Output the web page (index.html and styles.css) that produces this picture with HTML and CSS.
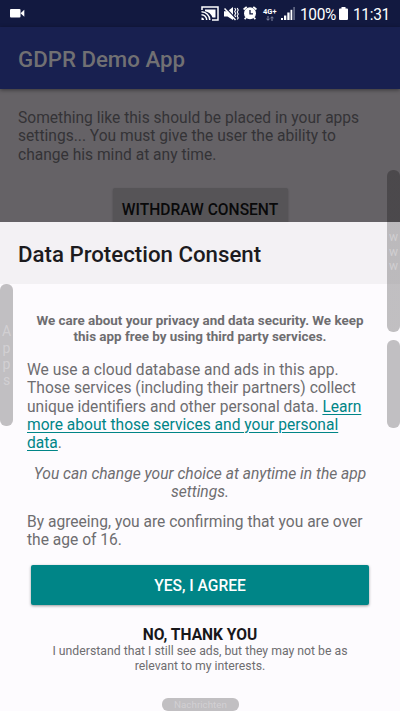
FILE: index.html
```html
<!DOCTYPE html>
<html lang="en">
<head>
<meta charset="utf-8">
<title>GDPR Demo App</title>
<link rel="stylesheet" href="styles.css">
</head>
<body>
<div class="screen">
  <header class="status">
    <svg class="camera" width="15" height="9" viewBox="0 0 15 9"><rect width="10.5" height="8.4" rx="1" fill="#fff"/><path d="M10.500 4.200 14.300.8v7z" fill="#fff"/></svg>
    <div class="status-right">
      <svg class="cast" width="18" height="15" viewBox="0 0 18 15" fill="none" stroke="#fff"><path d="M1 4V1h16v13h-6" stroke-width="1.500"/><path d="M4 3.500h10.500v8h-3C10.500 8 7.500 5.800 4 5.200z" fill="#fff" stroke="none"/><path d="M.5 5.800A8.300 8.300 0 0 1 8.800 14M.5 8.800A5.200 5.200 0 0 1 5.700 14" stroke-width="1.500"/><path d="M.5 11.500A2.500 2.500 0 0 1 3 14H.5z" fill="#fff" stroke="none"/></svg>
      <svg class="mute" width="15" height="14" viewBox="0 0 15 14"><path d="M0 4.300h3.500L9 0v13L3.500 9.500H0z" fill="#fff"/><path d="m1.500 .5 10.500 11.500" stroke="#121940" stroke-width="1.200"/><path d="m.5 1.500 11 11.500" stroke="#fff" stroke-width="1.500"/><path d="m10.700 1 1 1.800-1 1.800 1 1.800-1 1.800 1 1.800M13.200 1l1 2-1 2 1 2-1 2 1 2-1 1.500" fill="none" stroke="#fff" stroke-width="1.100"/></svg>
      <svg class="alarm" width="14" height="14" viewBox="0 0 14 14"><circle cx="7" cy="7.300" r="6" fill="#fff"/><path d="M.6 3.500 3.700.8M13.400 3.500 10.300.8M3 11.500l-1.300 1.800M11 11.500l1.300 1.800" stroke="#fff" stroke-width="1.700"/><path d="M7 4v3.800h3" fill="none" stroke="#121940" stroke-width="1.300"/></svg>
      <div class="network"><span>4G+</span><svg width="8" height="5" viewBox="0 0 8 5" stroke="#8288a0" fill="none"><path d="M2 0v4M.5 2.700 2 4.300l1.500-1.600M6 5V1M4.500 2.300 6 .7l1.500 1.600"/></svg></div>
      <svg class="signal" width="14" height="13" viewBox="0 0 14 13"><path d="M0 11h2v2H0zM3 8.500h2.300V13H3zM6.300 5.500h2.300V13H6.300z" fill="#fff"/><path d="M9.500 2.800h1.800V13H9.500z" fill="#fff"/><path d="M12.200 0H14v13h-1.800z" fill="#5c627f"/></svg>
      <span class="percent">100%</span>
      <svg class="battery" width="9" height="13" viewBox="0 0 9 13"><path d="M2.500 0h4v1.500H8q1 0 1 1V12q0 1-1 1H1q-1 0-1-1V2.500q0-1 1-1h1.500z" fill="#fff"/></svg>
      <span class="clock">11:31</span>
    </div>
  </header>
  <div class="toolbar">GDPR Demo App</div>
  <main class="app">
    <p>Something like this should be placed in your apps<br>settings... You must give the user the ability to<br>change his mind at any time.</p>
    <div class="withdraw">WITHDRAW CONSENT</div>
  </main>
  <section class="sheet">
    <h1>Data Protection Consent</h1>
    <div class="content">
      <p class="intro">We care about your privacy and data security. We keep<br>this app free by using third party services.</p>
      <p class="details">We use a cloud database and ads in this app.<br>Those services (including their partners) collect<br>unique identifiers and other personal data. <a>Learn<br>more about those services and your personal<br>data</a>.</p>
      <p class="change">You can change your choice at anytime in the app<br>settings.</p>
      <p class="age">By agreeing, you are confirming that you are over<br>the age of 16.</p>
      <div class="agree">YES, I AGREE</div>
      <div class="decline"><strong>NO, THANK YOU</strong><span>I understand that I still see ads, but they may not be as<br>relevant to my interests.</span></div>
    </div>
  </section>
  <div class="edge left"><span>A</span><span>p</span><span>p</span><span>s</span></div>
  <div class="edge right-top"><span>w</span><span>w</span><span>w</span></div>
  <div class="edge right-bottom"></div>
  <div class="edge bottom">Nachrichten</div>
</div>
</body>
</html>
```
FILE: styles.css
```css
* { box-sizing: border-box; }
body { margin: 0; font-family: Roboto, sans-serif; }
p, h1 { margin: 0; }
.screen { position: relative; width: 400px; height: 711px; overflow: hidden; display: flex; flex-direction: column; background: #656266; color: #6e6d70; font-size: 15.58px; line-height: 18.3px; white-space: nowrap; }
svg { display: block; flex: none; }
.status { height: 27px; flex: none; background: #121940; color: #fff; display: flex; justify-content: space-between; padding: 0 11px 0 10px; }
.camera { margin-top: 9px; }
.status-right { display: flex; width: 188px; }
.cast { margin: 6px 5px 0 0; }
.mute { margin: 7px 4px 0 0; }
.alarm { margin: 6px 6px 0 0; }
.network { width: 14px; margin: 8px 4px 0 0; display: flex; flex-direction: column; align-items: center; font-size: 7.5px; line-height: 7px; font-weight: 700; }
.network svg { margin-top: 1px; }
.signal { margin: 7px 5px 0 0; }
.percent, .clock { font-size: 16.8px; line-height: 29px; letter-spacing: -.35px; transform: scaleX(.92); transform-origin: left; }
.percent { width: 35px; }
.battery { margin: 7px 5px 0 4px; }
.toolbar { height: 62px; flex: none; background: #182050; color: #717073; font-size: 22.25px; font-weight: 500; line-height: 64px; padding-left: 18px; box-shadow: 0 1px 4px rgba(0,0,0,.45); }
.app { height: 133px; flex: none; padding: 20px 18px 0; color: #343336; display: flex; flex-direction: column; }
.withdraw { align-self: center; margin-top: 24px; width: 175px; height: 53px; border-radius: 2px; background: #565457; color: #09090a; font-weight: 500; text-align: center; line-height: 44px; box-shadow: 0 1px 2px rgba(0,0,0,.3); }
.sheet { flex: 1; background: #fdfbfe; }
h1 { height: 62px; padding-left: 18px; background: #f3f1f4; color: #1c1b1e; font-size: 22.25px; font-weight: 500; line-height: 64px; }
.content { padding: 29px 27px 0; display: flex; flex-direction: column; }
.intro { font-size: 13.4px; line-height: 16px; font-weight: 700; text-align: center; }
.details { margin-top: 16px; }
a { color: #008587; text-decoration: underline; text-decoration-thickness: 1px; text-underline-offset: 2px; }
.change { margin-top: 12.5px; font-style: italic; text-align: center; }
.age { margin-top: 11px; }
.agree { height: 40px; margin: 15.5px 4px 0; border-radius: 2px; background: #008587; color: #fff; text-align: center; font-weight: 500; line-height: 42px; box-shadow: 0 1px 3px rgba(0,0,0,.4); }
.decline { margin-top: 21.5px; text-align: center; display: flex; flex-direction: column; }
.decline strong { color: #18171a; font-weight: 700; }
.decline span { font-size: 12.25px; line-height: 14.6px; }
.edge { position: absolute; background: rgba(133,131,133,.5); color: rgba(220,218,221,.65); display: flex; align-items: center; justify-content: center; }
.left { left: 0; top: 284px; width: 13px; height: 142px; border-radius: 6px; flex-direction: column; font-size: 14px; line-height: 16.3px; padding-top: 2px; }
.right-top { left: 387px; top: 170px; width: 13px; height: 162px; border-radius: 6px; background: linear-gradient(rgba(50,48,50,.5) 52px, rgba(133,131,133,.5) 52px); flex-direction: column; justify-content: flex-start; padding-top: 60px; font-size: 12px; line-height: 14.7px; }
.right-bottom { left: 387px; top: 340px; width: 13px; height: 88px; border-radius: 6px; }
.bottom { left: 162px; top: 698px; width: 77px; height: 13px; border-radius: 6px; font-size: 9.8px; line-height: 13px; }
```
